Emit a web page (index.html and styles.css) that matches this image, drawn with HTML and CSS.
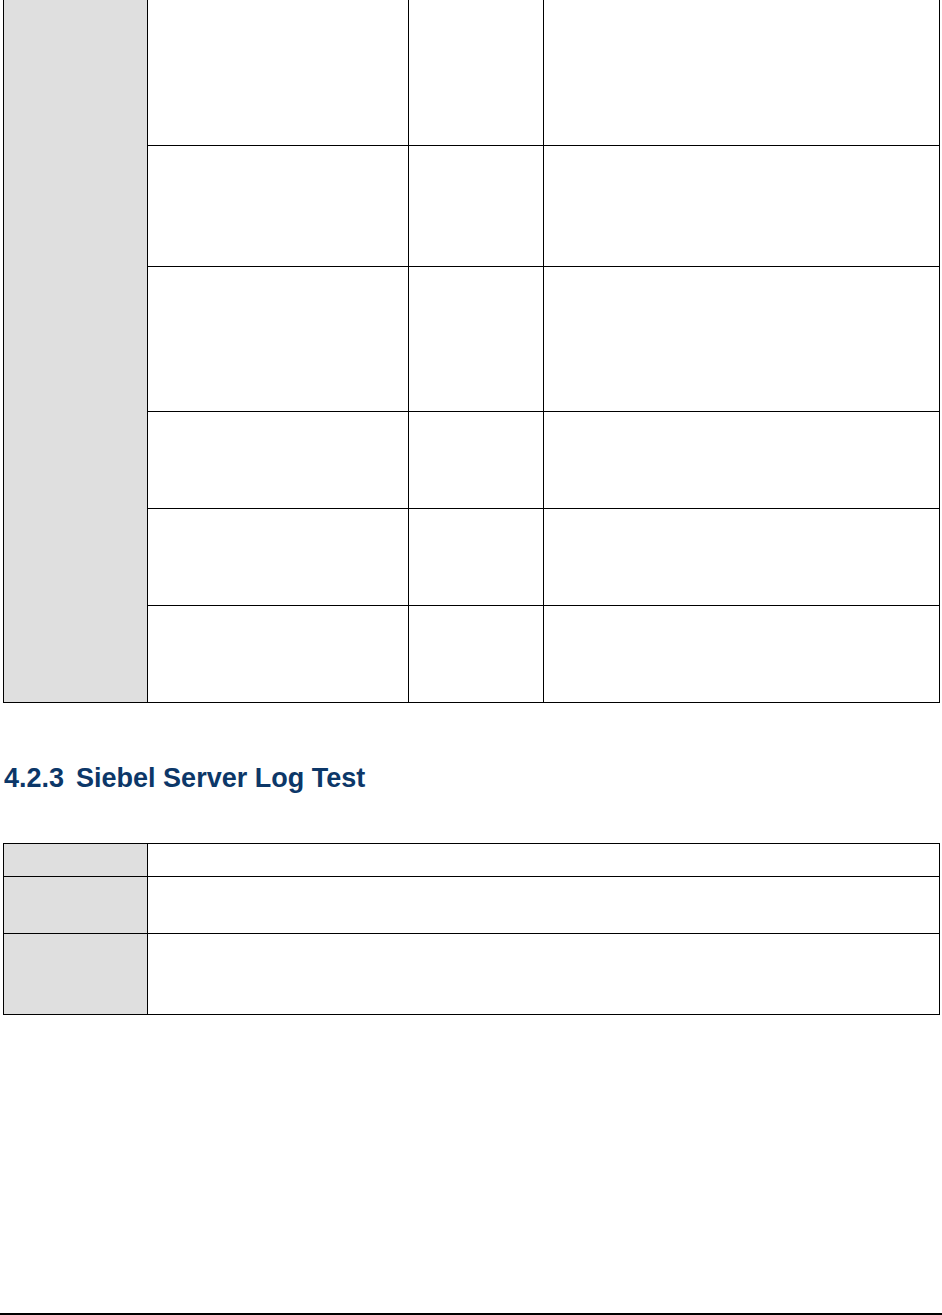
FILE: index.html
```html
<!DOCTYPE html>
<html lang="en">
<head>
<meta charset="utf-8">
<title>Siebel Server Log Test</title>
<link rel="stylesheet" href="styles.css">
</head>
<body>
<div class="page">
  <div class="grid t1">
    <div class="cell key span6"></div>
    <div class="cell"></div><div class="cell"></div><div class="cell"></div>
    <div class="cell"></div><div class="cell"></div><div class="cell"></div>
    <div class="cell"></div><div class="cell"></div><div class="cell"></div>
    <div class="cell"></div><div class="cell"></div><div class="cell"></div>
    <div class="cell"></div><div class="cell"></div><div class="cell"></div>
    <div class="cell"></div><div class="cell"></div><div class="cell"></div>
  </div>

  <h2 class="heading"><span class="num">4.2.3</span>Siebel Server Log Test</h2>

  <div class="grid t2">
    <div class="cell key"></div><div class="cell"></div>
    <div class="cell key"></div><div class="cell"></div>
    <div class="cell key"></div><div class="cell"></div>
  </div>

  <div class="footer-rule"></div>
</div>
</body>
</html>
```

FILE: styles.css
```css
html, body {
  margin: 0;
  padding: 0;
  background: #ffffff;
}

.page {
  width: 942px;
  font-family: "Liberation Sans", Arial, sans-serif;
}

.grid {
  display: grid;
  margin-left: 3px;
  width: 937px;
  box-sizing: border-box;
  border-left: 1px solid #000;
}

.cell {
  box-sizing: border-box;
  border-right: 1px solid #000;
  border-bottom: 1px solid #000;
  background: #ffffff;
}

.cell.key {
  background: #dfdfdf;
}

.t1 {
  grid-template-columns: 144px 261px 135px 396px;
  grid-template-rows: 146px 121px 145px 97px 97px 97px;
}

.span6 {
  grid-row: 1 / span 6;
}

.heading {
  margin: 60px 0 0 4px;
  font-size: 27px;
  line-height: 30px;
  font-weight: bold;
  color: #0c3768;
  letter-spacing: 0;
}

.num {
  margin-right: 12px;
}

.t2 {
  margin-top: 50px;
  border-top: 1px solid #000;
  grid-template-columns: 144px 792px;
  grid-template-rows: 33px 57px 81px;
}

.footer-rule {
  margin-top: 298px;
  height: 2px;
  background: #000;
}
```
